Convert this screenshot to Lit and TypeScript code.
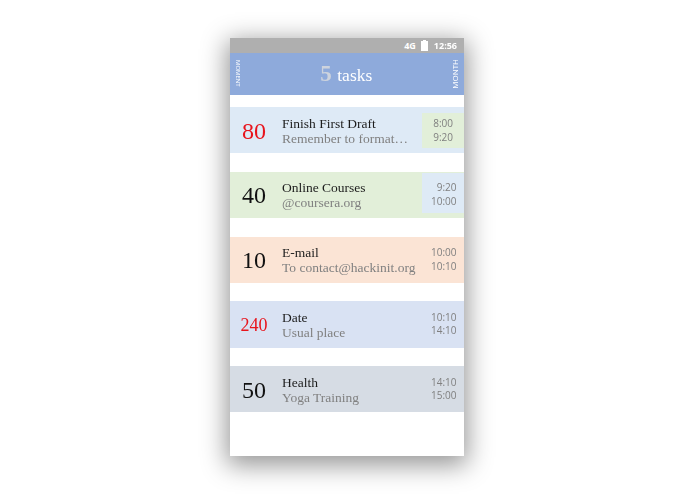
import { LitElement, html, css } from "lit";
import { customElement } from "lit/decorators.js";

interface Task { mins: string; red?: boolean; small?: boolean; title: string; sub: string; from: string; to: string; bg: string; timeBg?: string; tile?: string; }

const TASKS: Task[] = [
  { mins: "80", red: true, title: "Finish First Draft", sub: "Remember to format…", from: "8:00", to: "9:20", bg: "#deeaf6", timeBg: "#e2efd9", tile: "tile-a" },
  { mins: "40", title: "Online Courses", sub: "@coursera.org", from: "9:20", to: "10:00", bg: "#e2efd9", timeBg: "#deeaf6", tile: "tile-b" },
  { mins: "10", title: "E-mail", sub: "To contact@hackinit.org", from: "10:00", to: "10:10", bg: "#fbe4d5" },
  { mins: "240", red: true, small: true, title: "Date", sub: "Usual place", from: "10:10", to: "14:10", bg: "#d9e2f3" },
  { mins: "50", title: "Health", sub: "Yoga Training", from: "14:10", to: "15:00", bg: "#d6dce4" },
];

@customElement("app-root")
export class AppRoot extends LitElement {
  static styles = css`
    :host { display: block; width: 695px; height: 494px; background: #fff; overflow: hidden; font-family: "Liberation Serif", serif; }
    .page { height: 100%; box-sizing: border-box; padding: 38px 0 0 230px; }
    .phone { width: 234px; height: 417.5px; background: #fff; box-shadow: 0 6px 24px 3px rgba(0,0,0,.42); display: flex; flex-direction: column; filter: blur(.3px); }
    .status { height: 14.5px; flex: none; background: #afafaf; color: #fff; display: flex; align-items: center; justify-content: flex-end; padding-right: 7px; gap: 5.5px; font: 700 9px "Open Sans", sans-serif; }
    .battery { display: block; }
    .header { height: 42px; flex: none; background: #8eaadb; color: #fff; display: flex; align-items: center; justify-content: space-between; padding: 0 4px 0 3.5px; }
    .side { writing-mode: vertical-rl; font-family: "Open Sans", sans-serif; }
    .moment { font-size: 6px; }
    .month { font-size: 8px; transform: rotate(180deg); }
    .count { font-size: 17.5px; margin-left: 2px; }
    .count b { font-size: 23px; color: #cdd3dd; margin-right: 5.5px; }
    .list { display: flex; flex-direction: column; gap: 18.5px; padding-top: 12.5px; }
    .row { height: 46.25px; display: flex; align-items: stretch; }
    .mins { width: 48px; padding-top: 2px; box-sizing: border-box; display: flex; align-items: center; justify-content: center; font-size: 24px; color: #111; }
    .mins.red { color: #e8141c; }
    .mins.small { font-size: 18px; padding-top: 2px; }
    .text { flex: 1; min-width: 0; padding-left: 4px; padding-top: 1px; display: flex; flex-direction: column; justify-content: center; white-space: nowrap; }
    .title { font-size: 13.5px; line-height: 15px; color: #1c1c1c; }
    .sub { font-size: 13.5px; line-height: 15px; color: #808080; }
    .times { width: 42px; flex: none; box-sizing: border-box; padding: 0 7.5px 0 0; display: flex; flex-direction: column; justify-content: center; align-items: flex-end; font: 10px/13.5px "Open Sans", sans-serif; color: #7f7f7f; }
    .tile-a { margin: 6px 0 5px; padding-right: 11px; }
    .tile-b { margin: 1px 0 5px; padding-top: 4px; }
  `;

  render() {
    return html`<div class="page"><div class="phone">
      <div class="status">
        <span>4G</span>
        <svg class="battery" width="7" height="11" viewBox="0 0 7 11"><path d="M2 0h3v1h2v10H0V1h2z" fill="#fff"/></svg>
        <span>12:56</span>
      </div>
      <div class="header">
        <span class="side moment">MOMENT</span>
        <span class="count"><b>5</b>tasks</span>
        <span class="side month">MONTH</span>
      </div>
      <div class="list">
        ${TASKS.map((t) => html`<div class="row" style="background:${t.bg}">
          <div class="mins ${t.red ? "red" : ""} ${t.small ? "small" : ""}">${t.mins}</div>
          <div class="text"><span class="title">${t.title}</span><span class="sub">${t.sub}</span></div>
          <div class="times ${t.tile ?? ""}" style="background:${t.timeBg ?? "transparent"}"><span>${t.from}</span><span>${t.to}</span></div>
        </div>`)}
      </div>
    </div></div>`;
  }
}
